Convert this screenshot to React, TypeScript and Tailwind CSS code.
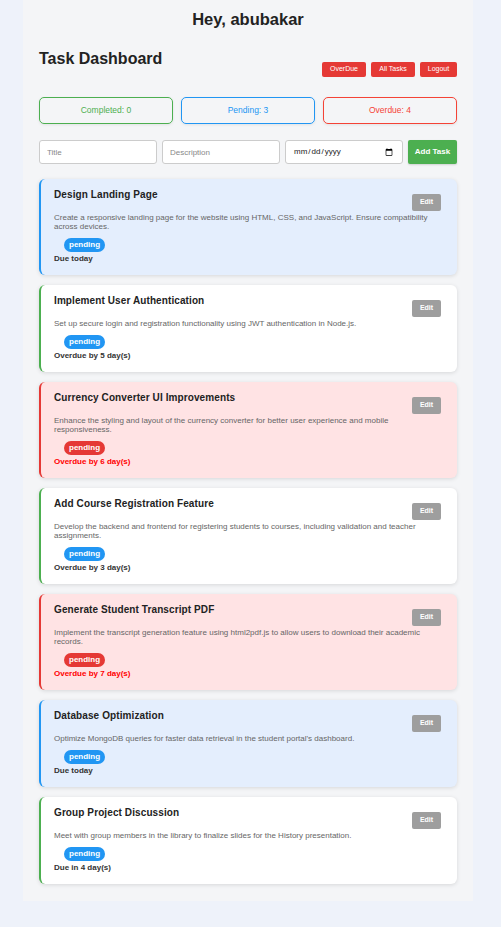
import React from "react";

type Task = {
  title: string;
  desc: string;
  tone: "blue" | "green" | "red";
  due: string;
};

const tasks: Task[] = [
  {
    title: "Design Landing Page",
    desc: "Create a responsive landing page for the website using HTML, CSS, and JavaScript. Ensure compatibility across devices.",
    tone: "blue",
    due: "Due today",
  },
  {
    title: "Implement User Authentication",
    desc: "Set up secure login and registration functionality using JWT authentication in Node.js.",
    tone: "green",
    due: "Overdue by 5 day(s)",
  },
  {
    title: "Currency Converter UI Improvements",
    desc: "Enhance the styling and layout of the currency converter for better user experience and mobile responsiveness.",
    tone: "red",
    due: "Overdue by 6 day(s)",
  },
  {
    title: "Add Course Registration Feature",
    desc: "Develop the backend and frontend for registering students to courses, including validation and teacher assignments.",
    tone: "green",
    due: "Overdue by 3 day(s)",
  },
  {
    title: "Generate Student Transcript PDF",
    desc: "Implement the transcript generation feature using html2pdf.js to allow users to download their academic records.",
    tone: "red",
    due: "Overdue by 7 day(s)",
  },
  {
    title: "Database Optimization",
    desc: "Optimize MongoDB queries for faster data retrieval in the student portal's dashboard.",
    tone: "blue",
    due: "Due today",
  },
  {
    title: "Group Project Discussion",
    desc: "Meet with group members in the library to finalize slides for the History presentation.",
    tone: "green",
    due: "Due in 4 day(s)",
  },
];

function Card({ t }: { t: Task }) {
  const cardCls =
    t.tone === "blue"
      ? "bg-[#e4eefd] border-l-[#2196f3]"
      : t.tone === "red"
      ? "bg-[#ffe3e4] border-l-[#e53935]"
      : "bg-white border-l-[#4caf50]";
  const badgeCls = t.tone === "red" ? "bg-[#e53935]" : "bg-[#2196f3]";
  const dueCls = t.tone === "red" ? "text-[#ff0000]" : "text-[#333]";
  return (
    <div
      className={`flex flex-col items-start rounded-[6px] border-l-2 pl-[13px] pr-[16px] pt-[10px] pb-[11px] shadow-[0_1px_4px_rgba(0,0,0,0.12)] ${cardCls}`}
    >
      <div className="w-full flex justify-between items-start">
        <h3 className="text-[10px] leading-[12px] font-bold text-[#222] tracking-[0.1px]">{t.title}</h3>
        <button className="mt-[5px] shrink-0 w-[29px] h-[17px] rounded-[2px] bg-[#9e9e9e] text-white text-[7px] font-bold">
          Edit
        </button>
      </div>
      <p className="mt-[2px] text-[8px] leading-[9px] text-[#666]">{t.desc}</p>
      <span
        className={`mt-[7px] ml-[10px] rounded-full px-[5px] h-[14px] flex items-center text-[8px] font-bold text-white ${badgeCls}`}
      >
        pending
      </span>
      <span className={`mt-[2px] text-[8px] leading-[10px] font-bold ${dueCls}`}>{t.due}</span>
    </div>
  );
}

export default function App() {
  return (
    <div className="min-h-[927px] bg-[#eef2fa] font-['Liberation_Sans',Arial,sans-serif]">
      <div className="ml-[23px] w-[450px] bg-[#f4f5f7] px-[16px] pt-[8px] pb-[17px]">
        <h1 className="text-center text-[16.5px] leading-[22px] font-bold text-[#222]">Hey, abubakar</h1>
        <div className="mt-[19px] flex justify-between items-start">
          <h2 className="text-[16px] leading-[20px] font-bold text-[#222]">Task Dashboard</h2>
          <div className="mt-[13px] flex gap-[5px]">
            <button className="h-[15px] w-[44px] rounded-[2px] bg-[#e53935] text-white text-[7px]">OverDue</button>
            <button className="h-[15px] w-[44px] rounded-[2px] bg-[#e53935] text-white text-[7px]">All Tasks</button>
            <button className="h-[15px] w-[37px] rounded-[2px] bg-[#e53935] text-white text-[7px]">Logout</button>
          </div>
        </div>
        <div className="mt-[20px] grid grid-cols-3 gap-[8px]">
          <div className="h-[27px] flex items-center justify-center rounded-[5px] border border-[#4caf50] text-[#4caf50] text-[8.5px] shadow-[0_1px_3px_rgba(0,0,0,0.08)]">
            Completed: 0
          </div>
          <div className="h-[27px] flex items-center justify-center rounded-[5px] border border-[#2196f3] text-[#2196f3] text-[8.5px] shadow-[0_1px_3px_rgba(0,0,0,0.08)]">
            Pending: 3
          </div>
          <div className="h-[27px] flex items-center justify-center rounded-[5px] border border-[#f44336] text-[#f44336] text-[8.5px] shadow-[0_1px_3px_rgba(0,0,0,0.08)]">
            Overdue: 4
          </div>
        </div>
        <div className="mt-[16px] flex gap-[5px]">
          <input
            placeholder="Title"
            className="w-[118px] h-[24px] rounded-[3px] border border-[#ccc] bg-white px-[7px] text-[8px] placeholder:text-[#888] outline-none"
          />
          <input
            placeholder="Description"
            className="w-[118px] h-[24px] rounded-[3px] border border-[#ccc] bg-white px-[7px] text-[8px] placeholder:text-[#888] outline-none"
          />
          <input
            type="date"
            className="w-[118px] h-[24px] rounded-[3px] border border-[#ccc] bg-white px-[7px] text-[8px] text-[#222] outline-none"
          />
          <button className="w-[49px] h-[24px] rounded-[2px] bg-[#4caf50] text-white text-[8px] font-bold shadow-[0_1px_2px_rgba(0,0,0,0.15)]">
            Add Task
          </button>
        </div>
        <div className="mt-[15px] flex flex-col gap-[10px]">
          {tasks.map((t) => (
            <Card key={t.title} t={t} />
          ))}
        </div>
      </div>
    </div>
  );
}
